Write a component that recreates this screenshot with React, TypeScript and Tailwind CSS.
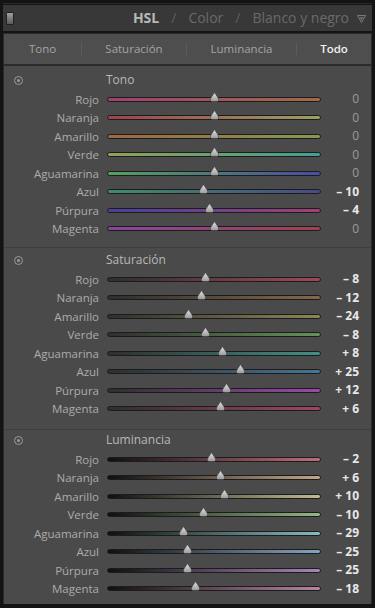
import React from "react"

type Row = { name: string; value: number; from: string; to: string }

const FONT = { fontFamily: '"Open Sans", "Noto Sans", "Liberation Sans", sans-serif' }

const tono: Row[] = [
  { name: "Rojo", value: 0, from: "#a04074", to: "#a06a48" },
  { name: "Naranja", value: 0, from: "#a0404a", to: "#9aa064" },
  { name: "Amarillo", value: 0, from: "#a06640", to: "#869a50" },
  { name: "Verde", value: 0, from: "#92a056", to: "#40a092" },
  { name: "Aguamarina", value: 0, from: "#56a05e", to: "#464ea0" },
  { name: "Azul", value: -10, from: "#408c68", to: "#484a86" },
  { name: "Púrpura", value: -4, from: "#4640a0", to: "#a04076" },
  { name: "Magenta", value: 0, from: "#8646a0", to: "#a0424e" },
]

const saturacion: Row[] = [
  { name: "Rojo", value: -8, from: "#2e2e2e", to: "#a04858" },
  { name: "Naranja", value: -12, from: "#2e2e2e", to: "#846846" },
  { name: "Amarillo", value: -24, from: "#2e2e2e", to: "#8e8656" },
  { name: "Verde", value: -8, from: "#2e2e2e", to: "#649258" },
  { name: "Aguamarina", value: 8, from: "#2e2e2e", to: "#409086" },
  { name: "Azul", value: 25, from: "#2e2e2e", to: "#487492" },
  { name: "Púrpura", value: 12, from: "#2e2e2e", to: "#9a4aaa" },
  { name: "Magenta", value: 6, from: "#2e2e2e", to: "#a04664" },
]

const luminancia: Row[] = [
  { name: "Rojo", value: -2, from: "#101010", to: "#c06c7a" },
  { name: "Naranja", value: 6, from: "#101010", to: "#c0a688" },
  { name: "Amarillo", value: 10, from: "#101010", to: "#c0bc90" },
  { name: "Verde", value: -10, from: "#101010", to: "#92b884" },
  { name: "Aguamarina", value: -29, from: "#101010", to: "#84bcbc" },
  { name: "Azul", value: -25, from: "#101010", to: "#84a4c0" },
  { name: "Púrpura", value: -25, from: "#101010", to: "#a884b8" },
  { name: "Magenta", value: -18, from: "#101010", to: "#b884a2" },
]

function formatValue(v: number) {
  if (v === 0) return "0"
  return `${v > 0 ? "+" : "–"} ${Math.abs(v)}`
}

function Thumb() {
  return (
    <svg width="11" height="10" viewBox="0 0 11 10">
      <defs>
        <linearGradient id="thumbg" x1="0" y1="0" x2="0" y2="1">
          <stop offset="0" stopColor="#e2e2e2" />
          <stop offset="1" stopColor="#9a9a9a" />
        </linearGradient>
      </defs>
      <path d="M5.5 0.5 L9.2 6 Q10.5 9.5 7.5 9.5 L3.5 9.5 Q0.5 9.5 1.8 6 Z" fill="url(#thumbg)" stroke="#3a3a3a" strokeWidth="0.6" />
    </svg>
  )
}

function SliderRow({ row }: { row: Row }) {
  const left = 106 + row.value * 1.05
  return (
    <div className="flex items-center h-[18.5px]">
      <div className="w-[95px] text-right text-[11.5px] text-[#acacac] leading-none">{row.name}</div>
      <div className="relative ml-[8px] w-[214px] h-[5px] rounded-full border border-[#1c1c1c]"
        style={{ background: `linear-gradient(to right, ${row.from}, ${row.to})` }}>
        <div className="absolute top-[-6px]" style={{ left: left - 5.5 }}>
          <Thumb />
        </div>
      </div>
      <div className={`w-[38px] text-right text-[12px] leading-none ${row.value === 0 ? "text-[#9a9a9a]" : "text-[#e8e8e8] font-bold"}`}>
        {formatValue(row.value)}
      </div>
    </div>
  )
}

function Section({ title, rows, className }: { title: string; rows: Row[]; className: string }) {
  return (
    <div className={className}>
      <div className="flex items-center h-[20px]">
        <div className="w-[28px] flex justify-center pl-[1px]">
          <div className="w-[9px] h-[9px] rounded-full border border-[#9a9a9a] flex items-center justify-center">
            <div className="w-[3px] h-[3px] rounded-full bg-[#9a9a9a]" />
          </div>
        </div>
        <div className="ml-[74px] text-[12px] text-[#b8b8b8] leading-none">{title}</div>
      </div>
      {rows.map((r) => (
        <SliderRow key={r.name} row={r} />
      ))}
    </div>
  )
}

export default function App() {
  return (
    <div className="w-[375px] h-[608px] bg-[#141414] overflow-hidden flex flex-col px-[3px]" style={FONT}>
      <div className="h-[4px] border-b border-[#2a2a2a]" />
      <div className="relative mt-[1px] h-[26px] bg-[#383838] flex items-center">
        <div className="ml-[3px] w-[8px] h-[13px] rounded-[1px] bg-gradient-to-b from-[#a0a0a0] to-[#5a5a5a] border border-[#222]" />
        <div className="flex-1 flex items-center justify-end gap-[12px] pr-[23px] text-[14px] leading-none">
          <span className="text-[#b8b8b8] font-bold">HSL</span>
          <span className="text-[#5e5e5e]">/</span>
          <span className="text-[#6a6a6a]">Color</span>
          <span className="text-[#5e5e5e]">/</span>
          <span className="text-[#6a6a6a]">Blanco y negro</span>
        </div>
        <svg className="absolute left-[354px] top-[10px]" width="9" height="8" viewBox="0 0 9 8">
          <path d="M0.5 0.5 H8.5 L4.5 7.5 Z" fill="none" stroke="#7a7a7a" strokeWidth="1" />
          <path d="M2.5 2 H6.5 L4.5 5.5 Z" fill="#6a6a6a" />
        </svg>
      </div>
      <div className="mt-[2px] h-[32px] bg-[#4e4e4e] border border-[#2c2c2c] flex items-center text-[11.5px] leading-none">
        <div className="w-[77px] text-center text-[#a4a4a4]">Tono</div>
        <div className="w-px h-[12px] bg-[#5c5c5c]" />
        <div className="w-[104px] text-center text-[#a4a4a4]">Saturación</div>
        <div className="w-px h-[12px] bg-[#5c5c5c]" />
        <div className="w-[109px] text-center text-[#a4a4a4]">Luminancia</div>
        <div className="w-px h-[12px] bg-[#5c5c5c]" />
        <div className="flex-1 text-center text-[#f0f0f0] font-semibold">Todo</div>
      </div>
      <div className="flex-1 bg-[#4a4a4a] border-x border-t border-[#2a2a2a] mb-[4px]">
        <Section title="Tono" rows={tono} className="pt-[4px] pb-[9px] border-b border-[#3e3e3e]" />
        <Section title="Saturación" rows={saturacion} className="pt-[2px] pb-[11px] border-b border-[#3e3e3e]" />
        <Section title="Luminancia" rows={luminancia} className="pt-[0px]" />
      </div>
    </div>
  )
}
